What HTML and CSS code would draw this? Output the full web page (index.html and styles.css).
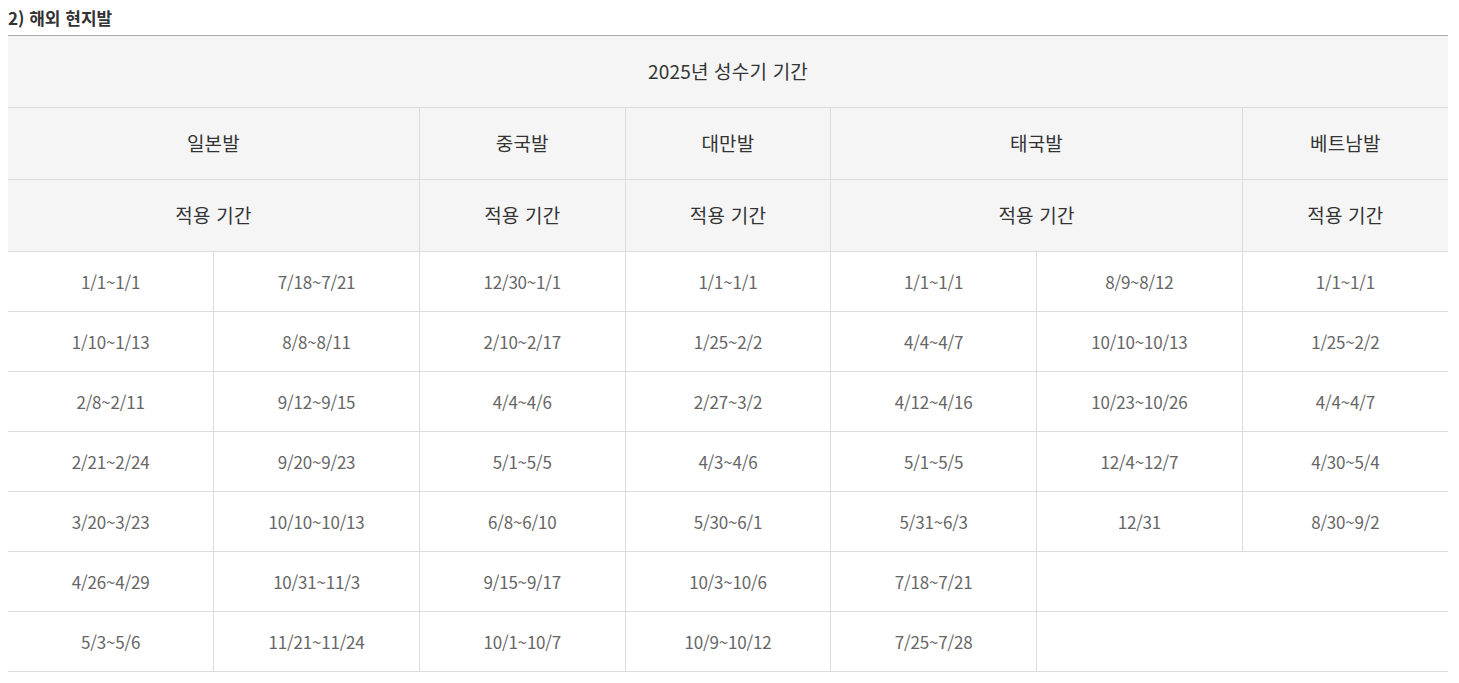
FILE: index.html
```html
<!DOCTYPE html>
<html lang="ko">
<head>
<meta charset="utf-8">
<link rel="stylesheet" href="styles.css">
</head>
<body>
<h4 class="sub-title">2) 해외 현지발</h4>
<table class="peak-table">
  <colgroup>
    <col><col><col><col><col><col><col>
  </colgroup>
  <thead>
    <tr><th colspan="7">2025년 성수기 기간</th></tr>
    <tr>
      <th colspan="2">일본발</th>
      <th>중국발</th>
      <th>대만발</th>
      <th colspan="2">태국발</th>
      <th>베트남발</th>
    </tr>
    <tr>
      <th colspan="2">적용 기간</th>
      <th>적용 기간</th>
      <th>적용 기간</th>
      <th colspan="2">적용 기간</th>
      <th>적용 기간</th>
    </tr>
  </thead>
  <tbody>
    <tr><td>1/1~1/1</td><td>7/18~7/21</td><td>12/30~1/1</td><td>1/1~1/1</td><td>1/1~1/1</td><td>8/9~8/12</td><td>1/1~1/1</td></tr>
    <tr><td>1/10~1/13</td><td>8/8~8/11</td><td>2/10~2/17</td><td>1/25~2/2</td><td>4/4~4/7</td><td>10/10~10/13</td><td>1/25~2/2</td></tr>
    <tr><td>2/8~2/11</td><td>9/12~9/15</td><td>4/4~4/6</td><td>2/27~3/2</td><td>4/12~4/16</td><td>10/23~10/26</td><td>4/4~4/7</td></tr>
    <tr><td>2/21~2/24</td><td>9/20~9/23</td><td>5/1~5/5</td><td>4/3~4/6</td><td>5/1~5/5</td><td>12/4~12/7</td><td>4/30~5/4</td></tr>
    <tr><td>3/20~3/23</td><td>10/10~10/13</td><td>6/8~6/10</td><td>5/30~6/1</td><td>5/31~6/3</td><td>12/31</td><td>8/30~9/2</td></tr>
    <tr><td>4/26~4/29</td><td>10/31~11/3</td><td>9/15~9/17</td><td>10/3~10/6</td><td>7/18~7/21</td><td colspan="2" class="empty"></td></tr>
    <tr><td>5/3~5/6</td><td>11/21~11/24</td><td>10/1~10/7</td><td>10/9~10/12</td><td>7/25~7/28</td><td colspan="2" class="empty"></td></tr>
  </tbody>
</table>
</body>
</html>
```
FILE: styles.css
```css
html, body {
  margin: 0;
  padding: 0;
  background: #fff;
}
body {
  margin: 8px;
  font-family: "Noto Sans CJK KR", "Noto Sans", sans-serif;
  color: #333;
}
.sub-title {
  margin: 0;
  height: 27px;
  font-size: 17px;
  font-weight: 700;
  line-height: 20px;
  letter-spacing: 0;
  color: #333;
}
.peak-table {
  width: 1440px;
  border-collapse: collapse;
  table-layout: fixed;
  border-top: 1px solid #a9a9a9;
}
.peak-table col {
  width: 14.2857%;
}
.peak-table th {
  height: 68px;
  padding: 0 0 3px;
  background: #f5f5f5;
  border-bottom: 1px solid #dcdcdc;
  border-left: 1px solid #dcdcdc;
  font-size: 19px;
  font-weight: 400;
  color: #333;
  letter-spacing: 0.2px;
  text-align: center;
  vertical-align: middle;
}
.peak-table td {
  height: 58px;
  padding: 0 0 1px;
  border-bottom: 1px solid #dcdcdc;
  border-left: 1px solid #dcdcdc;
  font-size: 17px;
  color: #666;
  letter-spacing: -0.2px;
  text-align: center;
  vertical-align: middle;
}
.peak-table tr > :first-child {
  border-left: none;
}
.peak-table thead tr:first-child th {
  border-left: none;
}
```
